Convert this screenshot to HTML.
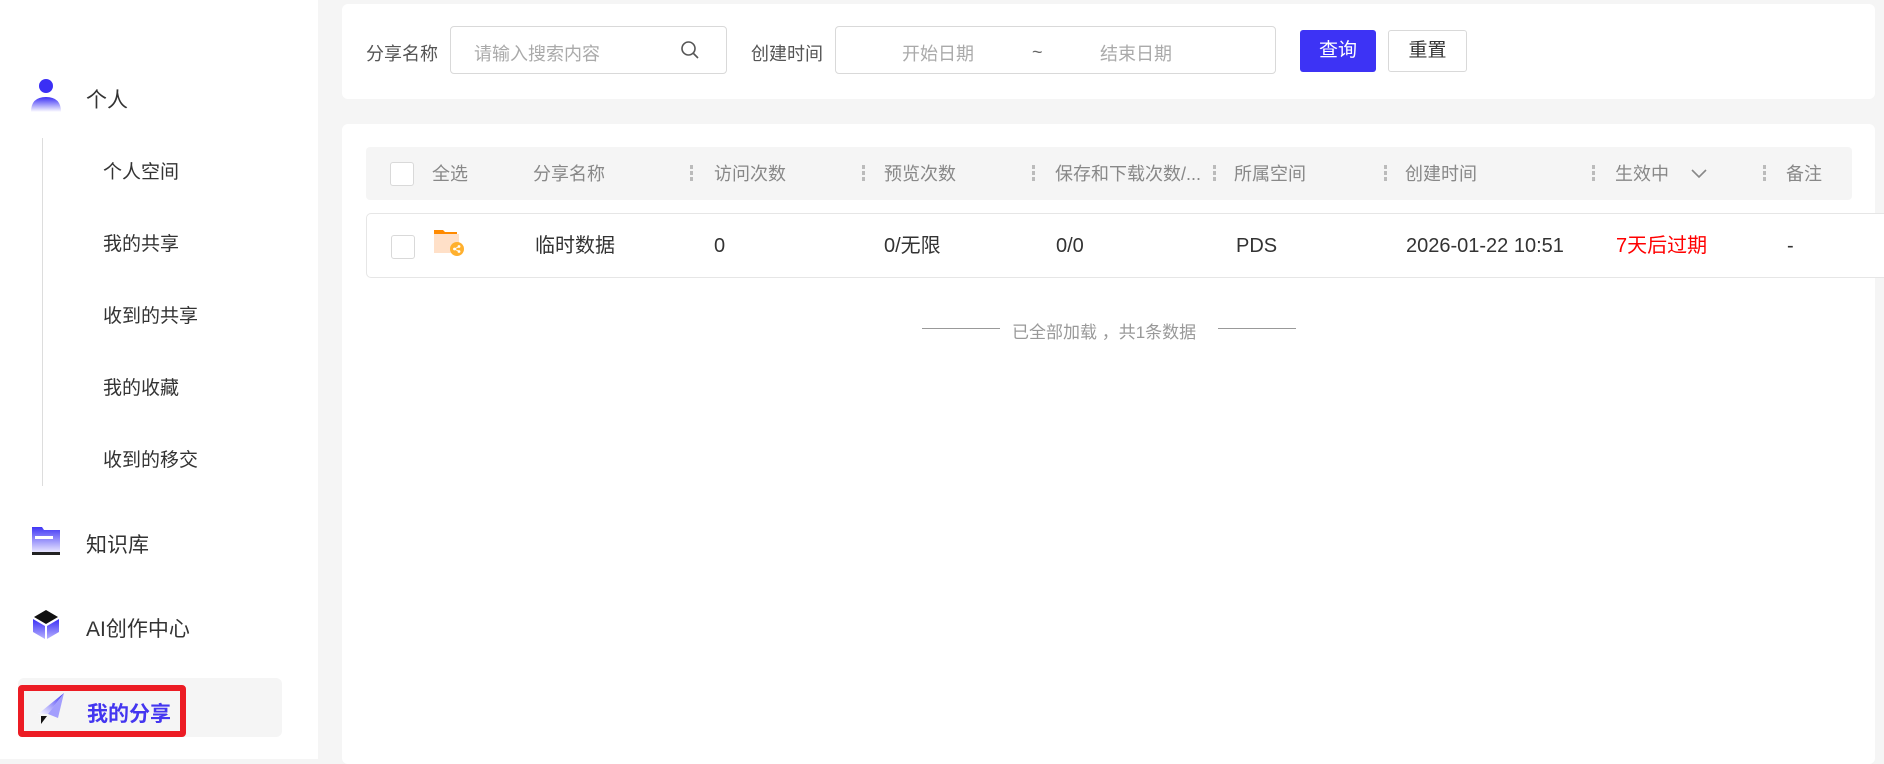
<!DOCTYPE html>
<html><head><meta charset="utf-8"><style>
*{box-sizing:border-box;margin:0;padding:0}
body{width:1884px;height:759px;overflow:hidden;background:#f5f5f5;font-family:"Liberation Sans","Noto Sans CJK SC",sans-serif;color:#333;position:relative}
.a{position:absolute;white-space:nowrap}
.side{position:absolute;left:0;top:0;width:318px;height:759px;background:#fff}
.card{position:absolute;background:#fff;border-radius:6px}
.sep{position:absolute;width:3px;height:18px;top:165px;background:repeating-linear-gradient(#bbb 0 4px,transparent 4px 6px)}
.hd{position:absolute;top:161px;height:26px;line-height:26px;font-size:18px;color:#888;white-space:nowrap}
.dt{position:absolute;top:232px;height:28px;line-height:28px;font-size:20px;color:#333;white-space:nowrap}
.cb{position:absolute;width:24px;height:24px;border:1px solid #d9d9d9;border-radius:3px;background:#fff}
</style></head><body>
<div class="side">
  <svg class="a" style="left:27px;top:78px" width="40" height="36" viewBox="0 0 40 36"><defs><linearGradient id="g1" x1="0" y1="0" x2="0" y2="1"><stop offset="0" stop-color="#3b2ff5"/><stop offset="1" stop-color="#fff"/></linearGradient></defs><circle cx="19" cy="8" r="7" fill="#3b2ff5"/><path d="M4 34 Q4 19 19 19 Q34 19 34 34Z" fill="url(#g1)"/></svg>
  <div class="a" style="left:86px;top:84px;font-size:21px;color:#333">个人</div>
  <div class="a" style="left:42px;top:138px;width:1px;height:348px;background:#ddd"></div>
  <div class="a" style="left:103px;top:157px;font-size:19px">个人空间</div>
  <div class="a" style="left:103px;top:229px;font-size:19px">我的共享</div>
  <div class="a" style="left:103px;top:301px;font-size:19px">收到的共享</div>
  <div class="a" style="left:103px;top:373px;font-size:19px">我的收藏</div>
  <div class="a" style="left:103px;top:445px;font-size:19px">收到的移交</div>
  <svg class="a" style="left:31px;top:526px" width="30" height="30" viewBox="0 0 30 30"><defs><linearGradient id="g2" x1="0" y1="0" x2="0" y2="1"><stop offset="0" stop-color="#4036f5"/><stop offset="1" stop-color="#e8e6ff"/></linearGradient></defs><path d="M1 1 H11 L13 4 H29 V26 H1Z" fill="url(#g2)"/><rect x="4" y="10" width="18" height="3" fill="#fff"/><rect x="1" y="26" width="28" height="3" fill="#222"/></svg>
  <div class="a" style="left:86px;top:529px;font-size:21px">知识库</div>
  <svg class="a" style="left:32px;top:610px" width="28" height="30" viewBox="0 0 28 30"><defs><linearGradient id="g3" x1="0" y1="0" x2="0" y2="1"><stop offset="0" stop-color="#3b2ff5"/><stop offset="1" stop-color="#b8b3ff"/></linearGradient></defs><path d="M14 0 L26 7 L14 14 L2 7Z" fill="#111"/><path d="M1 9 L13 16 V29 L1 22Z" fill="url(#g3)"/><path d="M27 9 L15 16 V29 L27 22Z" fill="url(#g3)"/></svg>
  <div class="a" style="left:86px;top:613px;font-size:21px">AI创作中心</div>
  <div class="a" style="left:18px;top:678px;width:264px;height:59px;background:#f5f5f5;border-radius:6px"></div>
  <div class="a" style="left:18px;top:685px;width:168px;height:52px;border:6px solid #ec1c24;border-radius:4px"></div>
  <svg class="a" style="left:36px;top:692px" width="30" height="34" viewBox="0 0 30 34"><defs><linearGradient id="g4" x1="1" y1="0" x2="0" y2="1"><stop offset="0" stop-color="#3b2ff5"/><stop offset="1" stop-color="#fff"/></linearGradient></defs><path d="M28 1 L2 22 L12 22 Z" fill="url(#g4)"/><path d="M28 1 L12 22 L22 26Z" fill="#8f88ff" opacity=".8"/><path d="M5 24 L11 24 L5 32Z" fill="#111"/></svg>
  <div class="a" style="left:87px;top:698px;font-size:21px;font-weight:bold;color:#4436f0">我的分享</div>
</div>

<div class="card" style="left:342px;top:4px;width:1533px;height:95px"></div>
<div class="a" style="left:366px;top:40px;font-size:18px;color:#555">分享名称</div>
<div class="a" style="left:450px;top:26px;width:277px;height:48px;border:1px solid #d9d9d9;border-radius:4px"></div>
<div class="a" style="left:474px;top:40px;font-size:18px;color:#aaa">请输入搜索内容</div>
<svg class="a" style="left:680px;top:40px" width="20" height="20" viewBox="0 0 20 20"><circle cx="8.5" cy="8.5" r="6.5" fill="none" stroke="#555" stroke-width="1.6"/><path d="M13.5 13.5 L18 18" stroke="#555" stroke-width="1.6"/></svg>
<div class="a" style="left:751px;top:40px;font-size:18px;color:#555">创建时间</div>
<div class="a" style="left:835px;top:26px;width:441px;height:48px;border:1px solid #d9d9d9;border-radius:4px"></div>
<div class="a" style="left:902px;top:40px;font-size:18px;color:#aaa">开始日期</div>
<div class="a" style="left:1032px;top:42px;font-size:18px;color:#666">~</div>
<div class="a" style="left:1100px;top:40px;font-size:18px;color:#aaa">结束日期</div>
<div class="a" style="left:1300px;top:30px;width:76px;height:42px;background:#3d33f5;border-radius:3px;color:#fff;font-size:19px;text-align:center;line-height:42px">查询</div>
<div class="a" style="left:1388px;top:30px;width:79px;height:42px;border:1px solid #d9d9d9;border-radius:3px;color:#333;font-size:19px;text-align:center;line-height:40px;background:#fff">重置</div>

<div class="card" style="left:342px;top:124px;width:1533px;height:640px"></div>
<div class="a" style="left:366px;top:147px;width:1486px;height:53px;background:#f5f5f5;border-radius:4px"></div>
<div class="cb" style="left:390px;top:162px"></div>
<div class="hd" style="left:432px">全选</div>
<div class="hd" style="left:533px">分享名称</div>
<div class="sep" style="left:690px"></div><div class="hd" style="left:714px">访问次数</div>
<div class="sep" style="left:862px"></div><div class="hd" style="left:884px">预览次数</div>
<div class="sep" style="left:1032px"></div><div class="hd" style="left:1055px">保存和下载次数/...</div>
<div class="sep" style="left:1213px"></div><div class="hd" style="left:1234px">所属空间</div>
<div class="sep" style="left:1384px"></div><div class="hd" style="left:1405px">创建时间</div>
<div class="sep" style="left:1592px"></div><div class="hd" style="left:1615px">生效中</div>
<svg class="a" style="left:1690px;top:167px" width="18" height="14" viewBox="0 0 18 14"><path d="M2 3 L9 10 L16 3" fill="none" stroke="#888" stroke-width="1.6"/></svg>
<div class="sep" style="left:1763px"></div><div class="hd" style="left:1786px">备注</div>

<div class="a" style="left:366px;top:213px;width:1530px;height:65px;border:1px solid #e6e6e6;border-radius:5px;background:#fff"></div>
<div class="cb" style="left:391px;top:235px"></div>
<svg class="a" style="left:433px;top:229px" width="32" height="28" viewBox="0 0 32 28"><path d="M1 1 H10 L12 3 H24 V8 H1Z" fill="#ff8a00"/><path d="M1 5 H26 V24 H1Z" fill="#ffe0c8"/><circle cx="24" cy="20" r="7" fill="#ffb02e"/><circle cx="21.5" cy="20" r="1.4" fill="#fff"/><circle cx="26" cy="17.5" r="1.4" fill="#fff"/><circle cx="26" cy="22.5" r="1.4" fill="#fff"/><path d="M21.5 20 L26 17.5 M21.5 20 L26 22.5" stroke="#fff" stroke-width="1"/></svg>
<div class="dt" style="left:535px">临时数据</div>
<div class="dt" style="left:714px">0</div>
<div class="dt" style="left:884px">0/无限</div>
<div class="dt" style="left:1056px">0/0</div>
<div class="dt" style="left:1236px">PDS</div>
<div class="dt" style="left:1406px">2026-01-22 10:51</div>
<div class="dt" style="left:1616px;color:#f00">7天后过期</div>
<div class="dt" style="left:1787px">-</div>

<div class="a" style="left:922px;top:328px;width:78px;height:1px;background:#999"></div>
<div class="a" style="left:1012px;top:318px;font-size:17px;color:#999">已全部加载 ，共1条数据</div>
<div class="a" style="left:1218px;top:328px;width:78px;height:1px;background:#999"></div>
</body></html>
